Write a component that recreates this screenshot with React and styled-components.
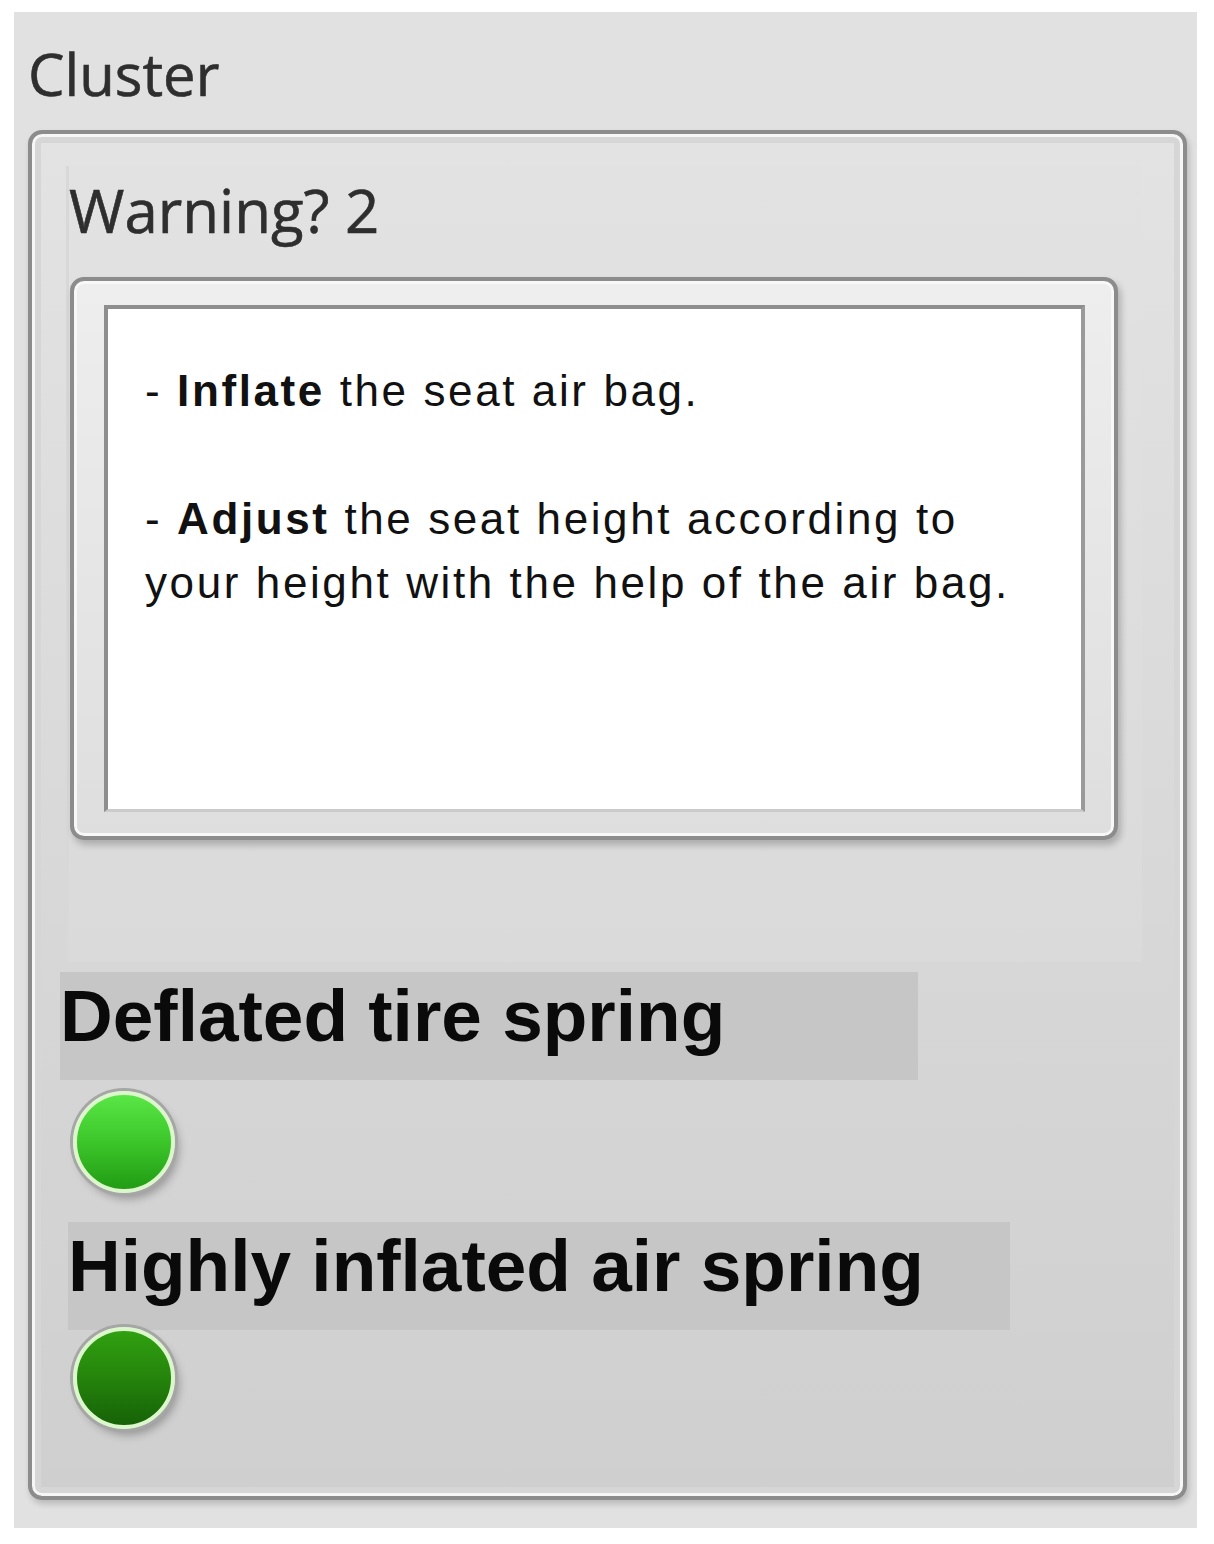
import React from 'react'
import styled, { createGlobalStyle } from 'styled-components'

const GlobalStyle = createGlobalStyle`
  body {
    margin: 0;
    background: #ffffff;
  }
`

const Page = styled.div`
  padding: 12px 0 0 14px;
`

const Panel = styled.div`
  box-sizing: border-box;
  width: 1183px;
  height: 1516px;
  padding: 27px 0 0 14px;
  background: #e1e1e1;
`

const Caption = styled.div`
  font-family: "Open Sans", "Noto Sans", sans-serif;
  font-size: ${p => p.$size || 58}px;
  line-height: 70px;
  color: #2e2e2e;
  -webkit-text-stroke: 0.6px #2e2e2e;
  margin-left: ${p => p.$indent || 0}px;
`

const Frame = styled.div`
  box-sizing: border-box;
  width: 1159px;
  height: 1370px;
  margin-top: 21px;
  border: 4px solid #8c8c8c;
  border-radius: 14px;
  background: linear-gradient(#e3e3e3, #d9d9d9 50%, #cfcfcf);
  box-shadow: inset 0 0 0 3px #f6f6f6, inset 0 0 0 9px #d6d6d6, 2px 4px 6px rgba(0, 0, 0, 0.18);
  display: flex;
  flex-direction: column;
  align-items: flex-start;
`

const StringControl = styled.div`
  box-sizing: border-box;
  width: 1076px;
  margin: 32px 0 0 34px;
  padding: 9px 0 122px 0;
  border-left: 3px solid #d8d8d8;
  background: linear-gradient(#e2e2e2, #dadada);
`

const TextFrame = styled.div`
  box-sizing: border-box;
  width: 1048px;
  height: 563px;
  margin: 32px 0 0 1px;
  padding: 24px 29px 24px 30px;
  border: 4px solid #8c8c8c;
  border-radius: 14px;
  background: linear-gradient(#eeeeee, #dedede);
  box-shadow: inset 0 0 0 3px #f8f8f8, 3px 5px 7px rgba(0, 0, 0, 0.22);
`

const TextArea = styled.div`
  box-sizing: border-box;
  height: 100%;
  padding: 50px 20px 0 37px;
  background: #ffffff;
  border-top: 4px solid #8e8e8e;
  border-left: 4px solid #8e8e8e;
  border-right: 4px solid #9a9a9a;
  border-bottom: 3px solid #cbcbcb;
  font-family: "Liberation Sans", Arial, sans-serif;
  font-size: 44px;
  line-height: 64px;
  letter-spacing: 2.6px;
  color: #111111;
`

const Para = styled.p`
  margin: 0 0 64px 0;
`

const IndicatorLabel = styled.div`
  box-sizing: border-box;
  width: ${p => p.$width}px;
  height: 108px;
  margin: ${p => p.$top}px 0 0 ${p => p.$left}px;
  background: #c6c6c6;
  font-family: "Liberation Sans", Arial, sans-serif;
  font-weight: bold;
  font-size: 73px;
  line-height: 88px;
  color: #0a0a0a;
  white-space: nowrap;
`

const Led = styled.div`
  box-sizing: border-box;
  width: 102px;
  height: 102px;
  margin: ${p => p.$top}px 0 0 41px;
  border-radius: 50%;
  border: 4px solid #dcf7cc;
  background: ${p => p.$on
    ? 'linear-gradient(#5ae646, #3cc62a 50%, #229c14)'
    : 'linear-gradient(#30a010, #25840c 50%, #166207)'};
  box-shadow: 0 0 0 3px #a6a6a6, 4px 6px 8px rgba(0, 0, 0, 0.28);
`

const App = () => {
  return (
    <Page>
      <GlobalStyle />
      <Panel>
        <Caption>Cluster</Caption>
        <Frame>
          <StringControl>
            <Caption $indent={0} $size={60}>Warning? 2</Caption>
            <TextFrame>
              <TextArea>
                <Para>- <b>Inflate</b> the seat air bag.</Para>
                <Para>- <b>Adjust</b> the seat height according to your height with the help of the air bag.</Para>
              </TextArea>
            </TextFrame>
          </StringControl>
          <IndicatorLabel $width={858} $left={28} $top={10}>Deflated tire spring</IndicatorLabel>
          <Led $on $top={11} />
          <IndicatorLabel $width={942} $left={36} $top={29}>Highly inflated air spring</IndicatorLabel>
          <Led $top={-3} />
        </Frame>
      </Panel>
    </Page>
  )
}

export default App
